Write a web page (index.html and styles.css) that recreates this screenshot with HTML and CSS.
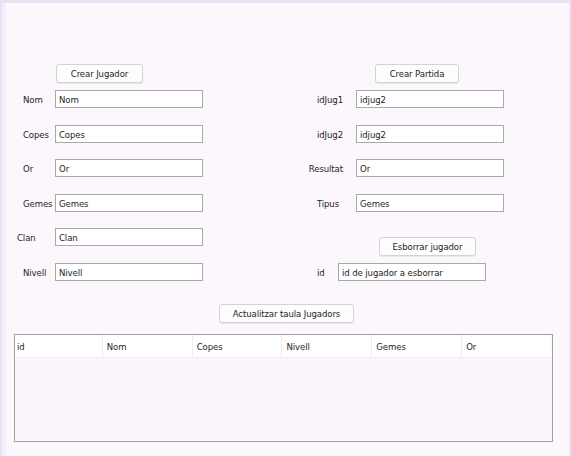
FILE: index.html
```html
<!DOCTYPE html>
<html>
<head>
<meta charset="utf-8">
<link rel="stylesheet" href="styles.css">
</head>
<body>
<div class="window">
  <div class="forms">
    <div class="col col-left">
      <button class="btn btn-jug">Crear Jugador</button>
      <div class="grid grid-left">
        <label class="lbl">Nom</label><div class="inp">Nom</div>
        <label class="lbl">Copes</label><div class="inp">Copes</div>
        <label class="lbl">Or</label><div class="inp">Or</div>
        <label class="lbl">Gemes</label><div class="inp">Gemes</div>
        <label class="lbl lbl-clan">Clan</label><div class="inp">Clan</div>
        <label class="lbl">Nivell</label><div class="inp">Nivell</div>
      </div>
    </div>
    <div class="col col-right">
      <button class="btn btn-part">Crear Partida</button>
      <div class="grid grid-right">
        <label class="lbl r">idJug1</label><div class="inp">idjug2</div>
        <label class="lbl r">idJug2</label><div class="inp">idjug2</div>
        <label class="lbl r">Resultat</label><div class="inp">Or</div>
        <label class="lbl r tipus">Tipus</label><div class="inp">Gemes</div>
      </div>
      <button class="btn btn-esb">Esborrar jugador</button>
      <div class="idrow">
        <label class="lbl">id</label><div class="inp inp-id">id de jugador a esborrar</div>
      </div>
    </div>
  </div>
  <div class="center">
    <button class="btn btn-act">Actualitzar taula Jugadors</button>
  </div>
  <div class="table">
    <div class="thead">
      <div class="th th-first">id</div>
      <div class="th">Nom</div>
      <div class="th">Copes</div>
      <div class="th">Nivell</div>
      <div class="th">Gemes</div>
      <div class="th">Or</div>
    </div>
  </div>
</div>
</body>
</html>
```
FILE: styles.css
```css
html, body {
  margin: 0;
  padding: 0;
}
body {
  width: 571px;
  height: 456px;
  overflow: hidden;
  background: #fcf6fd;
  font-family: "DejaVu Sans Condensed", "DejaVu Sans", sans-serif;
  font-size: 9.5px;
  letter-spacing: -0.1px;
  color: #1e1e1e;
}
.window {
  box-sizing: border-box;
  width: 571px;
  height: 456px;
  border-top: 3px solid #e7e3f5;
  border-left: 2px solid #e7e3f5;
  border-right: 2px solid #e9e5f6;
  box-shadow: inset 4px 0 0 #f2eff9;
  padding-top: 61px;
}
.forms {
  display: flex;
}
.col {
  display: flex;
  flex-direction: column;
  align-items: flex-start;
}
.col-left {
  margin-left: 21px;
  width: 280px;
}
.col-right {
  margin-left: 4px;
}
.btn {
  font-family: inherit;
  font-size: 9.5px;
  letter-spacing: -0.1px;
  color: #1e1e1e;
  background: #fdfdfd;
  border: 1px solid #d3d3d3;
  border-radius: 3px;
  height: 19px;
  padding: 0;
  margin: 0;
  box-shadow: 0 1px 0 #ece8ee;
}
.btn-jug {
  width: 87px;
  margin-left: 33px;
}
.btn-part {
  width: 84px;
  margin-left: 68px;
}
.btn-esb {
  width: 97px;
  margin-left: 72px;
  margin-top: 25px;
}
.btn-act {
  width: 135px;
}
.grid {
  display: grid;
  row-gap: 16.5px;
  margin-top: 7px;
  align-items: center;
}
.grid-left {
  grid-template-columns: 32px 148px;
}
.grid-right {
  grid-template-columns: 49px 148px;
}
.lbl {
  white-space: nowrap;
  padding-top: 1px;
}
.lbl-clan {
  margin-left: -6px;
}
.r {
  text-align: right;
  padding-right: 13px;
}
.tipus {
  padding-right: 17px;
}
.inp {
  box-sizing: border-box;
  height: 18px;
  background: #fff;
  border: 1px solid #a9a9a9;
  padding: 0 3px;
  line-height: 17px;
  white-space: nowrap;
}
.idrow {
  display: flex;
  align-items: center;
  margin-top: 7px;
  margin-left: 10px;
}
.idrow .lbl {
  width: 21px;
}
.inp-id {
  width: 148px;
}
.center {
  margin-top: 23px;
  padding-left: 217px;
}
.table {
  box-sizing: border-box;
  margin-top: 11px;
  margin-left: 12px;
  width: 539px;
  height: 108px;
  border: 1px solid #a0a0a0;
  background: #fbf6fc;
}
.thead {
  display: flex;
  width: 536px;
  height: 22px;
  background: #fff;
  border-bottom: 1px solid #fbeef0;
}
.th {
  box-sizing: border-box;
  width: 90px;
  padding-left: 4px;
  line-height: 23px;
  border-left: 1px solid #ececec;
}
.th-first {
  width: 87px;
  border-left: none;
  padding-left: 2px;
}
```
